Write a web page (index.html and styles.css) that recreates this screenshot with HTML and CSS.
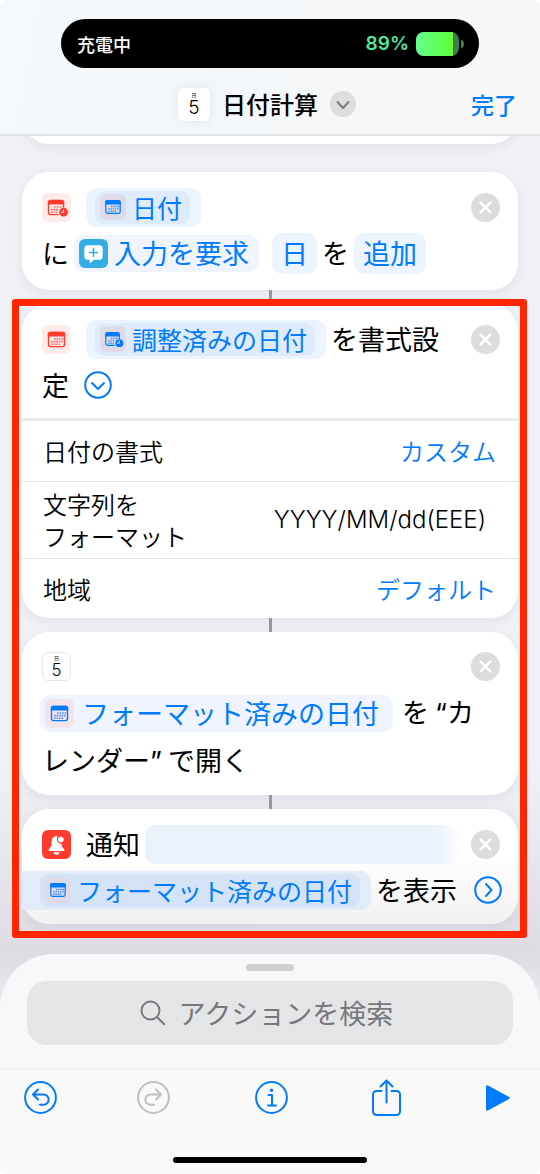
FILE: index.html
```html
<!DOCTYPE html>
<html lang="ja">
<head>
<meta charset="utf-8">
<meta name="viewport" content="width=device-width, initial-scale=1">
<title>日付計算</title>
<link rel="stylesheet" href="styles.css">
</head>
<body>
<svg class="sprite" aria-hidden="true">
  <symbol id="calendar" viewBox="0 0 30 30">
    <rect x="6.700" y="7.700" width="16.600" height="14.600" rx="2" fill="none" stroke="currentColor" stroke-width="1.400"/>
    <path d="M6 12V9.500a2.500 2.500 0 0 1 2.500-2.500h13a2.500 2.500 0 0 1 2.500 2.500V12z" fill="currentColor"/>
    <path d="M12.600 14.500H22M9.400 17.200H22M9.400 19.900H19" stroke="currentColor" stroke-width="1.600" stroke-dasharray="1.600 1" opacity=".75"/>
  </symbol>
  <symbol id="calendar-clock" viewBox="0 0 30 30">
    <path d="M17 22.300H8.700a2 2 0 0 1-2-2V10M22.300 10v5" fill="none" stroke="currentColor" stroke-width="1.400"/>
    <path d="M6 12V9.500a2.500 2.500 0 0 1 2.500-2.500h12a2.500 2.500 0 0 1 2.500 2.500V12z" fill="currentColor"/>
    <path d="M12.600 14.500H21M9.400 17.200H17M9.400 19.900H16" stroke="currentColor" stroke-width="1.600" stroke-dasharray="1.600 1" opacity=".75"/>
    <circle cx="22.300" cy="19.800" r="4.500" fill="currentColor"/>
    <path d="M22.300 17v2.800h-2.500" fill="none" stroke="#fff" stroke-width="1"/>
  </symbol>
  <symbol id="ask" viewBox="0 0 30 30">
    <path d="M9 6.500h12a3.500 3.500 0 0 1 3.500 3.500v8a3.500 3.500 0 0 1-3.500 3.500h-5.500l-3.500 3c-.6.500-1 .2-1-.5v-2.500H9A3.500 3.500 0 0 1 5.500 18v-8A3.500 3.500 0 0 1 9 6.500z" fill="#fff"/>
    <path d="M15 10v8M11 14h8" stroke="#32ade6" stroke-width="1.700" stroke-linecap="round"/>
  </symbol>
  <symbol id="bell" viewBox="0 0 30 30">
    <path d="M16 6.300c-4 0-6 2.500-6 5.900 0 4-.6 5.300-2.600 7.300-1 1.100-.7 2.300.7 2.300h13.800c1.400 0 1.700-1.200.7-2.300-1.600-1.600-2.300-2.800-2.500-5.200-3.400.3-5.700-3.600-4.100-8z" fill="#fff"/>
    <circle cx="19.500" cy="9.800" r="2.900" fill="#fff"/>
    <path d="M12 23h6a3 2.600 0 0 1-6 0z" fill="#fff"/>
  </symbol>
  <symbol id="close" viewBox="0 0 30 30">
    <path d="M10 10l10 10M20 10L10 20" stroke="#fff" stroke-width="2.600" stroke-linecap="round"/>
  </symbol>
  <symbol id="circle-down" viewBox="0 0 28 28">
    <circle cx="14" cy="14" r="12.800"/><path d="M8 12l6 6 6-6"/>
  </symbol>
  <symbol id="circle-right" viewBox="0 0 28 28">
    <circle cx="14" cy="14" r="12.800"/><path d="M12 8l5.500 6-5.500 6"/>
  </symbol>
</svg>

<header class="header">
  <div class="island">
    <span>充電中</span>
    <span class="charge">89%
      <svg class="battery" viewBox="0 0 50 24" aria-hidden="true">
        <defs>
          <linearGradient id="fill"><stop offset="0" stop-color="#62ff8f"/><stop offset="1" stop-color="#62ff35"/></linearGradient>
          <clipPath id="body"><rect width="43" height="24" rx="8"/></clipPath>
        </defs>
        <g clip-path="url(#body)"><rect width="43" height="24" fill="#3f7f4e"/><rect width="37" height="24" fill="url(#fill)"/></g>
        <path d="M45 8q3 0 3 4t-3 4z" fill="#3f7f4e"/>
      </svg>
    </span>
  </div>
  <div class="titlebar">
    <div class="title">
      <span class="day-icon day-icon--large"><small>日</small><b>5</b></span>
      <h1>日付計算</h1>
      <button class="title-menu" aria-label="メニュー">
        <svg viewBox="0 0 26 26"><path d="M7.500 11l5.500 6 5.500-6"/></svg>
      </button>
    </div>
    <button class="done">完了</button>
  </div>
</header>

<main class="actions">
  <div class="card card--tail"></div>

  <article class="card">
    <div class="line">
      <span class="icon icon--red"><svg><use href="#calendar-clock"/></svg></span>
      <button class="chip chip--nested"><span class="variable"><span class="icon icon--small"><svg><use href="#calendar"/></svg></span>日付</span></button>
      <button class="close" aria-label="削除"><svg><use href="#close"/></svg></button>
    </div>
    <div class="line line--text">
      <span>に</span>
      <button class="chip chip--variable"><span class="icon icon--ask"><svg><use href="#ask"/></svg></span>入力を要求</button>
      <button class="chip chip--plain chip--spaced">日</button>
      <span>を</span>
      <button class="chip chip--plain">追加</button>
    </div>
  </article>
  <div class="connector"></div>

  <section class="highlight">
    <article class="card">
      <div class="line">
        <span class="icon icon--red"><svg><use href="#calendar"/></svg></span>
        <button class="chip chip--nested"><span class="variable"><span class="icon icon--small"><svg><use href="#calendar-clock"/></svg></span>調整済みの日付</span></button>
        <span class="after">を書式設</span>
        <button class="close" aria-label="削除"><svg><use href="#close"/></svg></button>
      </div>
      <div class="line">
        <span>定</span>
        <button class="toggle" aria-label="詳細を隠す"><svg><use href="#circle-down"/></svg></button>
      </div>
      <div class="options">
        <div class="option">
          <label for="style">日付の書式</label>
          <select id="style"><option>カスタム</option></select>
        </div>
        <div class="option option--tall">
          <label for="format">文字列を<br>フォーマット</label>
          <input id="format" type="text" value="YYYY/MM/dd(EEE)">
        </div>
        <div class="option">
          <label for="region">地域</label>
          <select id="region"><option>デフォルト</option></select>
        </div>
      </div>
    </article>
    <div class="connector"></div>

    <article class="card card--compact">
      <div class="line line--icon">
        <span class="day-icon"><small>日</small><b>5</b></span>
        <button class="close" aria-label="削除"><svg><use href="#close"/></svg></button>
      </div>
      <div class="line line--chip">
        <button class="chip chip--variable chip--wide"><span class="icon icon--tint"><svg><use href="#calendar"/></svg></span>フォーマット済みの日付</button>
        <span class="quote">を <span class="latin">“</span>カ</span>
      </div>
      <div class="line"><span>レンダー<span class="latin">”</span> で開く</span></div>
    </article>
    <div class="connector"></div>

    <article class="card card--compact card--shaded">
      <div class="line">
        <span class="icon icon--alert"><svg><use href="#bell"/></svg></span>
        <span>通知</span>
        <button class="chip chip--blank" aria-label="通知の本文"></button>
        <button class="close" aria-label="削除"><svg><use href="#close"/></svg></button>
      </div>
      <div class="line line--bleed">
        <button class="chip chip--nested chip--bleed"><span class="variable"><span class="icon icon--small"><svg><use href="#calendar"/></svg></span>フォーマット済みの日付</span></button>
        <span class="after">を表示</span>
        <button class="toggle toggle--end" aria-label="詳細を表示"><svg><use href="#circle-right"/></svg></button>
      </div>
    </article>
  </section>
</main>

<footer class="bottom">
  <div class="sheet">
    <div class="grabber"></div>
    <label class="search">
      <svg viewBox="0 0 26 26" aria-hidden="true"><circle cx="10.500" cy="10.500" r="9"/><path d="M17.200 17.200l7 7"/></svg>
      <input type="text" placeholder="アクションを検索" aria-label="アクションを検索">
    </label>
  </div>
  <nav class="toolbar">
    <div class="history">
      <button class="tool" aria-label="取り消す"><svg viewBox="0 0 33 33"><circle cx="16.500" cy="16.500" r="15.400"/><path d="M14 8.500L9 13.500l5 5M9 13.500H19.500a5 5 0 0 1 0 10.300h-3.500"/></svg></button>
      <button class="tool" aria-label="やり直す" disabled><svg viewBox="0 0 33 33"><circle cx="16.500" cy="16.500" r="15.400"/><path d="M19 8.500l5 5-5 5M24 13.500H13.500a5 5 0 0 0 0 10.300h3.500"/></svg></button>
    </div>
    <button class="tool" aria-label="情報"><svg viewBox="0 0 33 33"><circle cx="16.500" cy="16.500" r="15.400"/><path d="M13.500 14h3.500v10.300M13 24.500h8"/><circle class="solid" cx="16.500" cy="9.200" r="1.700"/></svg></button>
    <button class="tool tool--share" aria-label="共有"><svg viewBox="0 0 29 37"><path d="M9.500 12H4.500A3.500 3.500 0 0 0 1 15.500v17A3.500 3.500 0 0 0 4.500 36h20a3.500 3.500 0 0 0 3.500-3.500v-17a3.500 3.500 0 0 0-3.500-3.500h-5M14.500 23.500V2M8.500 7.500l6-6 6 6"/></svg></button>
    <button class="tool tool--play" aria-label="実行"><svg viewBox="0 0 24 28"><path class="solid" d="M0 2.500v23q0 2 2 1l21-11.500q1.500-1 0-2L2 1.500q-2-1-2 1z"/></svg></button>
  </nav>
  <div class="home"></div>
</footer>
</body>
</html>
```

FILE: styles.css
```css
* {
  box-sizing: border-box;
}

html {
  background: #fff;
}

body {
  margin: 0;
  min-height: 100vh;
  display: flex;
  flex-direction: column;
  overflow-x: hidden;
  border-radius: 8px;
  background: #f1f0f5;
  color: #000;
  font-family: "Noto Sans CJK JP", sans-serif;
  font-size: 27px;
  line-height: 40px;
}

button,
input,
select {
  margin: 0;
  padding: 0;
  border: 0;
  background: none;
  color: #007aff;
  font: inherit;
  appearance: none;
}

svg {
  display: block;
}

.sprite {
  position: absolute;
  width: 0;
  height: 0;
}

.latin {
  font-family: Inter, sans-serif;
}

/* Header */

.header {
  position: relative;
  z-index: 1;
  padding: 19px 0 10px;
  border-bottom: 2px solid #e2e3e5;
  border-radius: 8px 8px 0 0;
  background: linear-gradient(100deg, #f5f9fb, #f4f7fa 45%, #f7f7f7 75%);
}

.island {
  display: flex;
  align-items: center;
  justify-content: space-between;
  height: 49px;
  margin: 0 61px;
  padding: 0 13px 0 16px;
  border-radius: 25px;
  background: #000;
  color: #fff;
  font-size: 18px;
  font-weight: 500;
}

.charge {
  display: flex;
  align-items: center;
  gap: 7px;
  color: #54e69a;
  font-family: Inter, sans-serif;
  font-size: 19px;
  font-weight: 600;
}

.battery {
  width: 50px;
  height: 24px;
}

.titlebar {
  display: grid;
  grid-template-columns: 1fr auto 1fr;
  align-items: center;
  margin-top: 16px;
  padding: 0 23px 0 17px;
}

.title {
  grid-column: 2;
  display: flex;
  align-items: center;
  gap: 12px;
}

.title h1 {
  margin: 0;
  font-size: 24px;
  font-weight: 500;
}

.title-menu {
  width: 26px;
  height: 26px;
  border-radius: 50%;
  background: #dcddde;
}

.title-menu svg {
  fill: none;
  stroke: #7b7c7f;
  stroke-width: 2;
  stroke-linecap: round;
  stroke-linejoin: round;
}

.done {
  justify-self: end;
  font-size: 23px;
  font-weight: 500;
}

.day-icon {
  display: flex;
  flex-direction: column;
  align-items: center;
  justify-content: center;
  gap: 2px;
  width: 29px;
  height: 29px;
  border: 1px solid #e8e8e8;
  border-radius: 6px;
  background: #fff;
}

.day-icon small {
  font-size: 5px;
  line-height: 5px;
}

.day-icon b {
  font-family: Inter, sans-serif;
  font-size: 17px;
  font-weight: 300;
  line-height: 16px;
}

.day-icon--large {
  width: 32px;
  height: 33px;
  border: 0;
  box-shadow: 0 0 12px rgba(0, 0, 0, 0.08);
}

.day-icon--large b {
  font-size: 19px;
  line-height: 18px;
}

/* Action list */

.actions {
  flex: 1;
  padding: 0 22px 28px;
  background: linear-gradient(to top, #dddce2, #f1f0f5 190px);
}

.card {
  padding: 12px 0 14px;
  border-radius: 27px;
  background: #fff;
  box-shadow: 0 3px 12px rgba(40, 30, 80, 0.07);
}

.card--tail {
  height: 60px;
  margin: -52px 0 28px;
}

.card--compact {
  padding-bottom: 11px;
}

.card--shaded {
  background: linear-gradient(#fff 40%, #f1f1f1);
}

.connector {
  width: 3px;
  height: 14px;
  margin: 0 auto;
  background: #98979c;
}

.line {
  display: flex;
  align-items: center;
  height: 46px;
  padding: 0 18px 0 20px;
  white-space: nowrap;
}

.line--text {
  gap: 5px;
}

.line--icon {
  height: 44px;
}

.line--chip {
  height: 50px;
  padding-left: 18px;
}

.line--bleed {
  padding: 0 16px 0 0;
}

.icon {
  display: block;
  flex: none;
  width: 29px;
  height: 29px;
  border-radius: 6px;
}

.icon svg,
.close svg {
  width: 100%;
  height: 100%;
}

.icon--red {
  margin-right: 15px;
  background: #ffebea;
  color: #ff3b30;
}

.icon--tint {
  background: #f3e3ea;
}

.icon--small {
  width: 26px;
  height: 26px;
  background: #dfdae8;
}

.icon--ask {
  background: #32ade6;
}

.icon--alert {
  margin-right: 15px;
  background: #ff3b30;
}

.chip {
  display: flex;
  align-items: center;
  height: 39px;
  border-radius: 10px;
  background: #ebf4ff;
}

.chip--nested {
  padding: 0 11px 0 9px;
}

.variable {
  display: flex;
  align-items: center;
  gap: 6px;
  height: 33px;
  padding: 0 8px 0 5px;
  border-radius: 9px;
  background: #deebfd;
  font-size: 25px;
}

.chip--variable {
  gap: 6px;
  height: 37px;
  padding: 0 10px 0 5px;
  background: #eff4ff;
}

.chip--wide {
  gap: 8px;
  padding-right: 14px;
}

.chip--plain {
  height: 41px;
  padding: 0 9px;
}

.chip--spaced {
  margin-left: 8px;
}

.chip--blank {
  flex: 1;
  margin: 0 10px 0 5px;
  background: linear-gradient(to right, #e9f2fd 92%, transparent);
}

.chip--bleed {
  padding-left: 18px;
  border-radius: 0 10px 10px 0;
  background: #e2ecf8;
}

.chip--bleed .variable {
  background: #d5e3f7;
}

.after {
  margin-left: 5px;
}

.quote {
  margin-left: 9px;
}

.close {
  flex: none;
  width: 29px;
  height: 29px;
  margin-left: auto;
  border-radius: 50%;
  background: #dcdcdf;
}

.toggle {
  flex: none;
  width: 28px;
  height: 28px;
  margin-left: 15px;
}

.toggle--end {
  margin-left: auto;
}

.toggle svg {
  width: 28px;
  height: 28px;
  fill: none;
  stroke: #007aff;
  stroke-width: 2;
  stroke-linecap: round;
  stroke-linejoin: round;
}

.options {
  margin: 10px 0 -14px;
  border-top: 3px solid #ebebec;
}

.option {
  display: flex;
  align-items: center;
  justify-content: space-between;
  min-height: 60px;
  padding: 0 22px 0 21px;
  font-size: 24px;
  font-weight: 350;
  line-height: 32px;
}

.option + .option {
  border-top: 1px solid #e0e0e1;
}

.option--tall {
  min-height: 77px;
  padding-right: 32px;
}

.option input {
  flex: 1;
  min-width: 0;
  color: #000;
  font-family: Inter, sans-serif;
  font-weight: 300;
  text-align: right;
}

/* Frame round the highlighted actions */

.highlight {
  position: relative;
}

.highlight::after {
  content: "";
  position: absolute;
  inset: -5px -9px -14px -10px;
  border: 7px solid #ff2600;
  border-radius: 3px;
  pointer-events: none;
}

/* Search sheet and toolbar */

.bottom {
  border-radius: 0 0 8px 8px;
  background: linear-gradient(#dddce2, #eeedf2 60px, #f9f9f9 61px);
}

.sheet {
  padding: 10px 27px 23px;
  border-bottom: 2px solid #f1f1f2;
  border-radius: 54px 54px 0 0;
  background: #f8f8fb;
}

.grabber {
  width: 48px;
  height: 7px;
  margin: 0 auto 10px;
  border-radius: 4px;
  background: #d0d0d2;
}

.search {
  display: flex;
  align-items: center;
  justify-content: center;
  gap: 13px;
  height: 64px;
  border-radius: 20px;
  background: #e4e5e7;
}

.search svg {
  width: 26px;
  height: 26px;
  fill: none;
  stroke: #77777c;
  stroke-width: 2;
  stroke-linecap: round;
}

.search input {
  width: 222px;
  color: #000;
}

.search input::placeholder {
  color: #77777c;
  opacity: 1;
}

.toolbar {
  display: flex;
  align-items: center;
  justify-content: space-between;
  padding: 9px 30px 0 24px;
}

.history {
  display: flex;
  gap: 80px;
}

.tool {
  width: 33px;
  height: 37px;
  display: grid;
  place-items: center;
}

.tool svg {
  width: 100%;
  fill: none;
  stroke: currentColor;
  stroke-width: 2;
  stroke-linecap: round;
  stroke-linejoin: round;
}

.tool .solid {
  fill: currentColor;
  stroke: none;
}

.tool:disabled {
  color: #bfbfc1;
}

.tool--share {
  width: 29px;
}

.tool--play {
  width: 24px;
}

.home {
  width: 194px;
  height: 6px;
  margin: 41px auto 11px;
  border-radius: 3px;
  background: #000;
}
```
